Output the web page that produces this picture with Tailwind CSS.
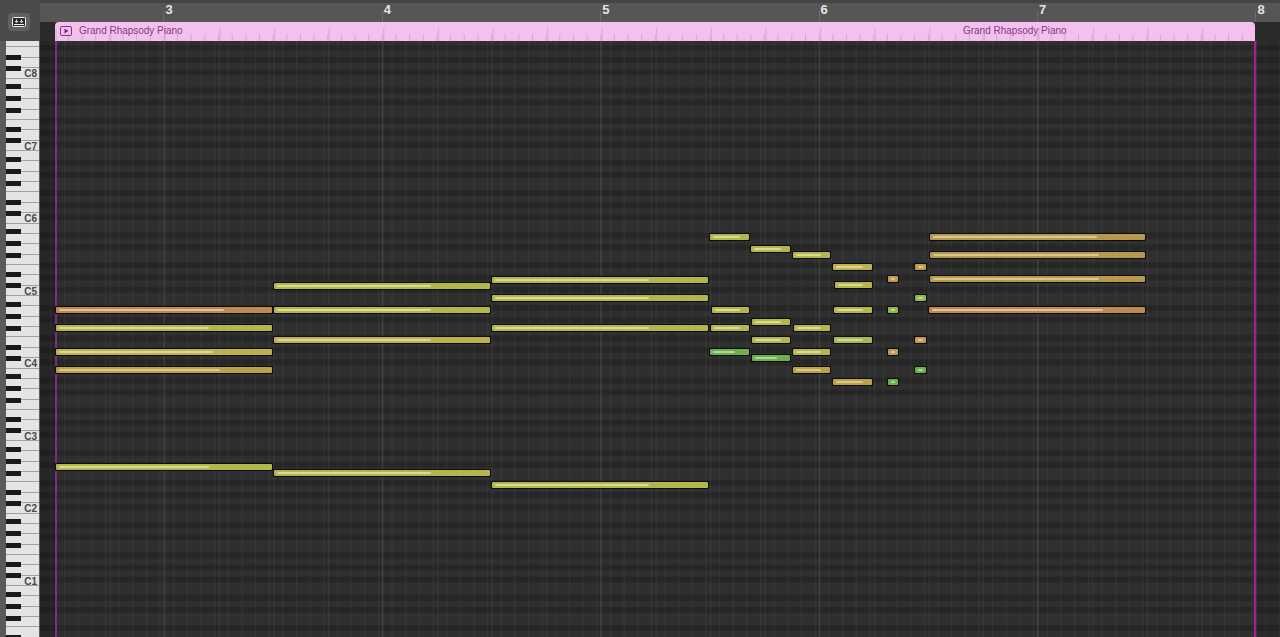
<!DOCTYPE html>
<html lang="en">
<head>
<meta charset="utf-8">
<title>Piano roll</title>
<script src="https://cdn.jsdelivr.net/npm/@tailwindcss/browser@4"></script>
</head>
<body class="m-0 bg-[#2a2a2a] overflow-hidden">
<div class="flex w-[1280px] h-[637px] overflow-hidden font-['Liberation_Sans',Arial,sans-serif]">

  <!-- left column -->
  <aside class="w-[40px] shrink-0 flex flex-col bg-[#4a4a4a]">
    <div class="h-[41px] shrink-0 pt-[13px] pl-[8px]">
      <button class="w-[22px] h-[18px] rounded-[4px] bg-[#616161] flex items-center justify-center">
        <svg width="14" height="10" viewBox="0 0 14 10" fill="none">
          <rect x="0.5" y="0.5" width="13" height="9" rx="1" fill="#2a2a2a" stroke="#f0f0f0"/>
          <path d="M4.5 2.5v2.2M3 4l1.5 1.8L6 4M9.5 2.5v2.2M8 4l1.5 1.8L11 4" stroke="#f0f0f0" stroke-width="1"/>
          <path d="M2 7.5h10" stroke="#f0f0f0" stroke-width="1"/>
        </svg>
      </button>
    </div>
    <div class="relative flex-1 bg-[#5a5a5a]">
      <div id="keys" class="absolute left-[6px] right-[1px] top-0 bottom-0 bg-[#e4e4e4] overflow-hidden"></div>
    </div>
  </aside>

  <!-- right column -->
  <main class="flex-1 flex flex-col min-w-0">
    <div id="ruler" class="relative h-[22px] shrink-0 bg-[#565656] border-t-[3px] border-[#444444] text-[#e4e4e4] text-[13px] font-bold"></div>

    <div class="h-[19px] shrink-0 bg-[#2a2a2a] pl-[15px]">
      <div class="relative w-[1200px] h-full rounded-t-[4px] bg-[#f4c1ef] overflow-hidden">
        <svg class="absolute inset-0" width="1200" height="19">
          <defs>
            <pattern id="tickS" x="12.9" y="0" width="13.65" height="19" patternUnits="userSpaceOnUse"><rect x="0" y="12" width="1" height="7" fill="#d7a4d3"/></pattern>
            <pattern id="tickL" x="0.7" y="0" width="54.6" height="19" patternUnits="userSpaceOnUse"><rect x="0" y="6" width="1" height="13" fill="#d7a4d3"/></pattern>
          </defs>
          <rect width="1200" height="19" fill="url(#tickS)"/>
          <rect width="1200" height="19" fill="url(#tickL)"/>
        </svg>
        <div class="absolute left-[5px] top-[4px] w-[12px] h-[10px] rounded-[2px] border border-[#7f3a80] flex items-center justify-center">
          <svg width="5" height="6" viewBox="0 0 5 6"><path d="M0.5 0.5L4.5 3L0.5 5.5Z" fill="#6f2a70"/></svg>
        </div>
        <span class="absolute left-[24px] top-[2px] text-[10px] leading-[14px] tracking-[-0.02px] text-[#7f3a80] whitespace-nowrap">Grand Rhapsody Piano</span>
        <span class="absolute left-[908px] top-[2px] text-[10px] leading-[14px] tracking-[-0.02px] text-[#7f3a80] whitespace-nowrap">Grand Rhapsody Piano</span>
      </div>
    </div>

    <div id="roll" class="relative flex-1 overflow-hidden bg-[#2f2f2f]">
      <svg class="absolute inset-0" width="1240" height="596">
        <defs>
          <pattern id="rows" x="0" y="-2" width="1240" height="72.5" patternUnits="userSpaceOnUse">
            <rect y="6.04" width="1240" height="6.04" fill="#262626"/>
            <rect y="18.12" width="1240" height="6.04" fill="#262626"/>
            <rect y="30.2" width="1240" height="6.04" fill="#262626"/>
            <rect y="48.32" width="1240" height="6.04" fill="#262626"/>
            <rect y="60.4" width="1240" height="6.04" fill="#262626"/>
          </pattern>
          <pattern id="v16" x="10.3" y="0" width="13.65" height="596" patternUnits="userSpaceOnUse"><rect width="1" height="596" fill="#ffffff" fill-opacity="0.05"/></pattern>
          <pattern id="v4" x="14.9" y="0" width="54.6" height="596" patternUnits="userSpaceOnUse"><rect width="1" height="596" fill="#ffffff" fill-opacity="0.06"/></pattern>
          <pattern id="vbar" x="123.4" y="0" width="218.4" height="596" patternUnits="userSpaceOnUse"><rect width="1" height="596" fill="#ffffff" fill-opacity="0.09"/></pattern>
        </defs>
        <rect width="1240" height="596" fill="url(#rows)"/>
        <rect width="1240" height="596" fill="url(#v16)"/>
        <rect width="1240" height="596" fill="url(#v4)"/>
        <rect width="1240" height="596" fill="url(#vbar)"/>
        <rect width="15" height="596" fill="#000000" fill-opacity="0.18"/>
        <rect x="1215" width="25" height="596" fill="#000000" fill-opacity="0.1"/>
      </svg>
      <div class="absolute left-[15px] top-0 bottom-0 w-[2px] bg-[#7e2c82]"></div>
      <div class="absolute left-[1214px] top-0 bottom-0 w-[2px] bg-[#a81f8c]"></div>
      <div id="notes"></div>
    </div>
  </main>
</div>

<script>
  // keyboard
  const keys = document.getElementById('keys');
  const keyTop = 41;
  const octaveH = 72.5;
  const whiteH = octaveH / 7;
  const add = (parent, cls, css, text) => {
    const el = document.createElement('div');
    el.className = cls;
    el.style.cssText = css;
    if (text) el.textContent = text;
    parent.appendChild(el);
  };
  for (let y = 296 - octaveH * 4; y < 660; y += whiteH) {
    add(keys, 'absolute left-0 right-0 h-[1px] bg-[#a0a0a0]', `top:${(y - keyTop - 1).toFixed(1)}px`);
  }
  for (let o = -4; o < 6; o++) {
    const base = 296 + o * octaveH;
    for (const d of [-13, -24, -43, -55, -67]) {
      add(keys, 'absolute left-0 w-[15px] h-[5px] bg-[#1a1a1a]', `top:${(base + d - keyTop).toFixed(1)}px`);
    }
  }
  for (let n = 8, y = 68; n >= 1; n--, y += octaveH) {
    add(keys, 'absolute right-[2px] text-[10px] leading-[12px] font-bold text-[#484848]', `top:${(y - keyTop).toFixed(1)}px`, 'C' + n);
  }

  // ruler
  const ruler = document.getElementById('ruler');
  [3, 4, 5, 6, 7, 8].forEach((n, i) => {
    const x = 123.4 + i * 218.4;
    add(ruler, 'absolute top-[8px] bottom-0 w-[1px] bg-[#6a6a6a]', `left:${x.toFixed(1)}px`);
    add(ruler, 'absolute top-[-1px] leading-[16px]', `left:${(x + 2).toFixed(1)}px`, String(n));
  });

  // notes: x0, x1, centre y, colour, highlight share
  const fills = {
    o: ['bg-[#bd8a52]', 'bg-[#e4bf96]'],
    g: ['bg-[#b4b54d]', 'bg-[#d8dc90]'],
    y: ['bg-[#bcb14e]', 'bg-[#dcd78c]'],
    d: ['bg-[#b9a04b]', 'bg-[#dcc98a]'],
    t: ['bg-[#b5994d]', 'bg-[#dcc68e]'],
    a: ['bg-[#c09a55]', 'bg-[#e2c896]'],
    n: ['bg-[#6cb04c]', 'bg-[#acd894]'],
    l: ['bg-[#a6b852]', 'bg-[#cbdb94]'],
    m: ['bg-[#8eb84e]', 'bg-[#c5dc98]']
  };
  const data = [
    [55,273,310,'o',.77],[55,273,328,'g',.70],[55,273,352,'y',.72],[55,273,370,'d',.75],[55,273,467,'g',.70],
    [273,491,286,'g',.72],[273,491,310,'g',.72],[273,491,340,'y',.72],[273,491,473,'g',.72],
    [491,709,280,'g',.72],[491,709,298,'g',.72],[491,709,328,'g',.72],[491,709,485,'g',.72],
    [709,750,237,'g',.72],[750,791,249,'g',.72],[792,831,255,'g',.72],[832,873,267,'y',.72],[834,873,285,'g',.72],
    [711,750,310,'g',.72],[833,873,310,'g',.72],[751,791,322,'g',.72],[710,750,328,'g',.72],[793,831,328,'g',.72],
    [751,791,340,'g',.72],[833,873,340,'l',.72],[709,750,352,'n',.62],[792,831,352,'g',.72],[751,791,358,'n',.62],
    [792,831,370,'d',.72],[832,873,382,'d',.72],
    [887,899,279,'a',.6],[887,899,310,'m',.6],[887,899,352,'a',.6],[887,899,382,'n',.6],
    [914,927,267,'d',.6],[914,927,298,'m',.6],[914,927,340,'a',.6],[914,927,370,'n',.6],
    [929,1146,237,'t',.77],[929,1146,255,'t',.78],[929,1146,279,'t',.78],[928,1146,310,'o',.8]
  ];
  const notes = document.getElementById('notes');
  const rollTop = 41, rollLeft = 40;
  for (const [x0, x1, yc, c, share] of data) {
    const w = x1 - x0;
    const el = document.createElement('div');
    el.className = 'absolute h-[8px] p-[1px] bg-[#0d0d0d] rounded-[1px]';
    el.style.cssText = `left:${x0 - rollLeft}px;top:${Math.round(yc - 4 - rollTop)}px;width:${w}px`;
    const body = document.createElement('div');
    body.className = 'relative h-full rounded-[1px] ' + fills[c][0];
    const hl = document.createElement('div');
    hl.className = 'absolute left-[3px] top-[2px] h-[2px] rounded-[1px] ' + fills[c][1];
    hl.style.width = Math.round(w * share - 3) + 'px';
    body.appendChild(hl);
    el.appendChild(body);
    notes.appendChild(el);
  }
</script>
</body>
</html>
